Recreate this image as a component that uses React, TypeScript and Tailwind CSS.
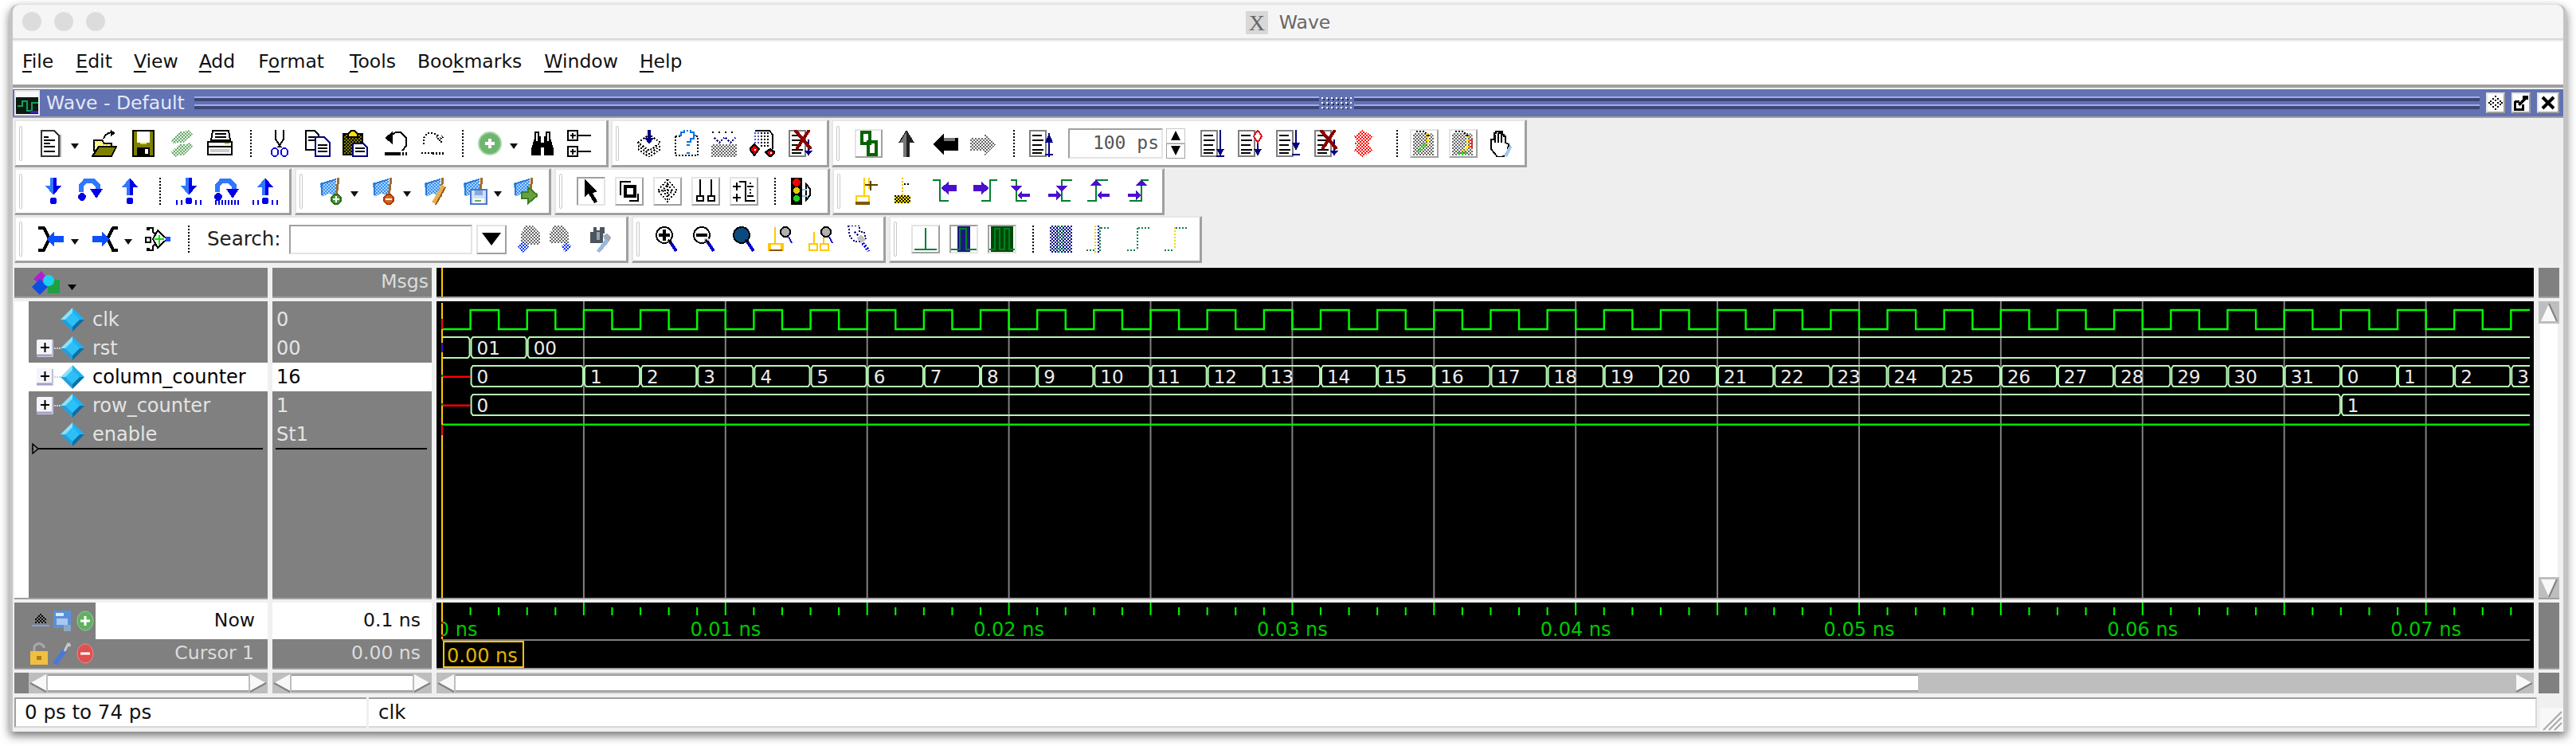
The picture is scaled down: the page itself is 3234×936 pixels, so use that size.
import React from "react";

const R = (x: number, y: number, w: number, h: number, f = "#000") => <rect x={x} y={y} width={w} height={h} fill={f} />;
const L = (d: string, c = "#000", sw = 1) => <path d={d} fill="none" stroke={c} strokeWidth={sw} />;
const D = (d: string, c = "#000", sw = 1) => <path d={d} fill="none" stroke={c} strokeWidth={sw} strokeDasharray="1 1" />;
const F = (d: string, f = "#000", s = "none") => <path d={d} fill={f} stroke={s} strokeWidth={1} />;
const C = (x: number, y: number, r: number, f = "#000", s = "none") => <circle cx={x} cy={y} r={r} fill={f} stroke={s} strokeWidth={1} />;

function G({ children, w = 32, h = 34, smooth = false }: { children: React.ReactNode; w?: number; h?: number; smooth?: boolean }) {
  return (
    <svg width={w} height={h} viewBox={`0 0 ${w / 2} ${h / 2}`} shapeRendering={smooth ? "auto" : "crispEdges"} className="block shrink-0">
      {children}
    </svg>
  );
}

function Defs() {
  const p = (id: string, c: string, bg = "none") => (
    <pattern id={id} patternUnits="userSpaceOnUse" width="2" height="2">
      <rect width="2" height="2" fill={bg} />
      <rect width="1" height="1" fill={c} />
      <rect x="1" y="1" width="1" height="1" fill={c} />
    </pattern>
  );
  return (
    <svg width="0" height="0" className="absolute">
      <defs>
        {p("dk", "#000")}
        {p("dg", "#6aaa6a", "#e6f2e6")}
        {p("dn", "#000080")}
        {p("db", "#0030f0")}
        {p("dy", "#ffff00", "#fff")}
        {p("dgr", "#666")}
        {p("dol", "#000", "#808000")}
        {p("dr", "#f00")}
        {p("dfl", "#3a90f0", "#a8d4ff")}
        {p("dgy", "#000", "#ffe000")}
      </defs>
    </svg>
  );
}

/* ---------- toolbar 1 icons ---------- */
const INew = () => (
  <G w={28}>
    {F("M1.5 .5H9.5L12.5 3.5V16.5H1.5Z", "#fff", "#333")}
    {R(13, 3, 1, 14, "#aaa")}
    {R(3, 4, 3, 1)}{R(3, 6, 7, 1)}{R(3, 8, 4, 1)}{R(3, 10, 7, 1)}{R(3, 13, 7, 1)}
  </G>
);
const IOpen = () => (
  <G>
    {L("M7.5 5.5Q9 1.5 13.5 1.5", "#000")}
    {F("M12 0L15 2L12 4Z")}
    {F("M1.5 6.5H6.5L8 8.5H12.5V13H1.5Z", "url(#dy)", "#000")}
    {F("M.5 16.5L4.5 10.5H15.5L12.5 16.5Z", "#808000", "#000")}
  </G>
);
const ISave = () => (
  <G>
    {F("M1.5 .5H14.5V16.5H1.5Z", "#808000", "#000")}
    {R(4, 1, 8, 7, "#fff")}
    {R(4, 11, 8, 5, "#000")}
    {R(9, 12, 2, 3, "#fff")}
    {R(6, 8, 4, 1, "#ffe000")}
  </G>
);
const IReload = () => (
  <G>
    {F("M1 7L7 1H10L12 0L15 3L9 8H5L3 9Z", "url(#dg)")}
    {F("M15 10L9 16H6L4 17L1 14L7 9H11L13 8Z", "url(#dg)")}
  </G>
);
const IPrint = () => (
  <G>
    {F("M3.5 .5H13.5L14.5 6.5H2.5Z", "#fff", "#000")}
    {R(5, 2, 7, 1)}{R(5, 4, 7, 1)}
    {F("M.5 7.5H15.5V15.5H.5Z", "#fff", "#000")}
    {R(1, 10, 14, 1)}{R(2, 12, 12, 2, "#ccc")}{R(11, 8, 3, 1, "#e0c000")}
  </G>
);
const ICut = () => (
  <G w={24}>
    {L("M3.5 0V6L7 11")}{L("M8.5 0V6L5 11")}
    <ellipse cx="3" cy="14" rx="2" ry="2.6" fill="none" stroke="#0000e0" />
    <ellipse cx="9" cy="14" rx="2" ry="2.6" fill="none" stroke="#0000e0" />
  </G>
);
const ICopy = () => (
  <G>
    {F("M.5 .5H6L8.5 3V12.5H.5Z", "#fff", "#000")}
    {R(2, 4, 4, 1)}{R(2, 6, 4, 1)}
    {F("M6.5 4.5H12L15.5 8V16.5H6.5Z", "#fff", "#000080")}
    {R(8, 9, 6, 1, "#000")}{R(8, 11, 6, 1, "#000")}{R(8, 13, 6, 1, "#000")}
  </G>
);
const IPaste = () => (
  <G>
    {F("M.5 2.5H12.5V15.5H.5Z", "url(#dol)", "#000")}
    {F("M3.5 2.5L5.5 .5H7.5L9.5 2.5V4.5H3.5Z", "#ffe000", "#000")}
    {F("M6.5 8.5H13L15.5 11V16.5H6.5Z", "#fff", "#000080")}
    {R(8, 11, 6, 1, "#000")}{R(8, 13, 6, 1, "#000")}
  </G>
);
const IUndo = () => (
  <G>
    {L("M4.5 3.5L8 1.5H11L14.5 5V10L12 13")}
    {F("M1 5L6 1V9Z")}
    {R(1, 14, 9, 2)}{D("M10 14.5H16")}{D("M10 15.5H16")}
  </G>
);
const IRedo = () => (
  <G>
    {D("M2.5 9V5L5 2H9L12 4")}
    {F("M10 3L12 5L14 3L15 5L13 6L15 8L13 8L11 6Z", "url(#dk)")}
    {D("M1 14.5H9")}{D("M8 14.5H15", "#000", 1.5)}
  </G>
);
const ICircle = ({ c = "#6fb56f", e = "#a8d8a8", plus = true, w = 30 }: { c?: string; e?: string; plus?: boolean; w?: number }) => (
  <G w={w} smooth>
    {C(w / 4, 8.5, 7, c, e)}
    {R(w / 4 - 3, 7.5, 6, 2, "#fff")}
    {plus && R(w / 4 - 1, 5.5, 2, 6, "#fff")}
  </G>
);
const IBinoc = () => (
  <G>
    {F("M3 1H6V4H7V8H9V4H10V1H13V5L15 12V16H9V11H7V16H1V12L3 5Z")}
    {R(4, 2, 1, 5, "#fff")}{R(11, 2, 1, 5, "#fff")}
  </G>
);
const ITree = () => (
  <G>
    {L("M.5 .5H6.5V6.5H.5Z")}{L("M3.5 2V5.5M2 3.5H5.5")}{R(7, 3, 8, 1)}
    {L("M.5 10.5H6.5V16.5H.5Z")}{L("M3.5 12V15.5M2 13.5H5.5")}{R(7, 13, 8, 1)}
  </G>
);
const IStackIn = () => (
  <G>
    {D("M1 8L8 3L15 8L8 13Z")}
    {D("M1 10L8 15L15 10")}{D("M1 12L8 17L15 12")}{D("M2 9L8 13L14 9")}
    {R(7, 0, 2, 6, "#000080")}{F("M5 5H11L8 9Z", "#000080")}
  </G>
);
const IQ = () => (
  <G>
    {D("M1 4V16H15V4")}{D("M1 4H4M12 4H15")}
    {D("M4 4V2H6V0H11V2H13V5H11V7H9V11", "#0a70e8", 2)}
    {D("M9 14V16", "#0a70e8", 2)}
  </G>
);
const IDots = () => (
  <G>
    {D("M1 1V3M5 1V3M9 1V3M13 1V3")}
    {D("M2 5L5 8L8 5M9 5L12 8L15 5", "#000080")}
    <rect x="0" y="9" width="16" height="8" fill="url(#dgr)" />
  </G>
);
const IRoll = () => (
  <G>
    {L("M3.5 .5H12.5L14.5 3V12")}
    {D("M3 2H7M3 4H7M3 6H7M3 8H7", "#5050c0")}
    {D("M7 2H13M7 4H13M7 6H13M7 8H13M7 10H13", "#000")}
    {F("M3 9L6 12L3 16L0 12Z", "#e00010", "#000")}
    {F("M13 12L16 14L13 17L10 14Z", "#e00010", "#000")}
    {R(3, 12, 1, 1, "#fff")}{R(13, 14, 1, 1, "#fff")}
  </G>
);
const IDoc = ({ v }: { v: "up" | "down" | "red" | "short" | "x" | "x2" }) => (
  <G>
    {F("M.5 .5H10.5V16.5H.5Z", "#fff", "#808080")}
    {R(2, 3, 6, 1)}{R(2, 6, 7, 1)}{R(2, 9, 6, 1)}{R(2, 12, 7, 1)}{R(2, 14, 6, 1)}
    {v === "up" && <>{R(12, 2, 1, 15, "#000080")}{F("M10 8L12.5 2L15 8Z", "#000080")}{R(10, 15, 5, 1, "#000080")}</>}
    {v === "down" && <>{R(12, 0, 1, 16, "#000080")}{F("M10 12H15L12.5 16Z", "#000080")}{R(10, 16, 5, 1, "#000080")}</>}
    {v === "red" && <>{R(12, 6, 1, 10, "#000080")}{F("M12.5 0L15 4L12.5 8L10 4Z", "#fff", "#e01020")}{F("M10 12H15L12.5 16Z", "#000080")}</>}
    {v === "short" && <>{R(12, 0, 1, 10, "#000080")}{F("M10 8H15L12.5 13Z", "#000080")}{R(10, 15, 5, 1, "#000080")}</>}
    {(v === "x" || v === "x2") && <>
      {R(12, 6, 1, 10, "#000080")}{F("M10 13H15L12.5 16Z", "#000080")}
      {L("M4 0L14 12M13 0L5 12", "#8b0000", 2)}
    </>}
  </G>
);
const IRedDith = () => (
  <G w={28}>
    {F("M7 0L13 4L10 8.5L13 13L7 17L1 13L4 8.5L1 4Z", "url(#dr)")}
    {D("M2 8.5H12", "#f00")}
  </G>
);
const IYellowPlus = ({ n }: { n: 1 | 2 }) => (
  <G>
    {F("M1 2H12L14 4V16H1Z", "url(#dgr)")}
    {D("M3 1L8 1L11 4", "#000", 1)}
    {D(n === 1 ? "M10 2V9L6 11" : "M11 4V11L7 14", "#ffd800", 2)}
    {D(n === 1 ? "M4 14L9 8" : "M5 15H10", "#30e030", 2)}
    {n === 2 && D("M13 6V11", "#ff2020", 2)}
  </G>
);
const IHand = () => (
  <G>
    {F("M3 10V6H5V2H6V1H8V2H9V1H10V3H11V4H12V8L14 9L13 15L10 17H7L3 12Z", "#fff", "#000")}
    {L("M5.5 3V8M7.5 2V8M9.5 2V8")}
    {F("M11 16L15 9L16 11L13 17Z", "#a0c8f0")}
  </G>
);
const Chain = () => (
  <G w={24}>
    {L("M2 1.5H7V8.5H2Z", "#006400", 2)}{L("M6 7.5H11V15.5H6Z", "#006400", 2)}
  </G>
);
const IUp = () => (
  <G>
    {F("M8 0L13 8H10V17H6V8H3Z", "#222")}
    {F("M8 1V17H6V8H4Z", "#777")}
  </G>
);
const ILeft = () => (
  <G>
    {F("M0 9L7 2V5H16V13H7V16Z", "#000")}
    {F("M7 5V7H14V5Z", "#777")}
  </G>
);
const IRight = () => (
  <G>
    {F("M16 9L9 2V5H0V13H9V16Z", "url(#dgr)")}
  </G>
);

/* ---------- row 2 ---------- */
const B = "#0000e8";
const B2 = "#2f78ff";
const Bars = () => <>{R(0, 14, 1, 3, B)}{R(3, 14, 1, 3, B)}{R(12, 14, 1, 3, B)}{R(15, 14, 1, 3, B)}</>;
const IStepIn = ({ bars = false }: { bars?: boolean }) => (
  <G>
    {F("M6 0H10V5H13L8 11L3 5H6Z", B)}{F("M6 0H8V11L3 5H6Z", B2)}
    {C(8, 14.5, 2.2, B)}{bars && <Bars />}
  </G>
);
const IStepUp = ({ bars = false }: { bars?: boolean }) => (
  <G>
    {F("M8 0L13 6H10V11H6V6H3Z", B)}{F("M8 0V11H6V6H3Z", B2)}
    {C(8, 14.5, 2.2, B)}{bars && <Bars />}
  </G>
);
const IOver = ({ bars = false }: { bars?: boolean }) => (
  <G>
    {L("M2.5 9V5L5 2H10L13 5V7", B2, 3)}
    {F("M8 7H16L12 13Z", B)}{C(3, 12, 2.4, B)}
    {bars && <>{D("M1 15.5H16", B, 3)}</>}
  </G>
);
const Flag = ({ children }: { children?: React.ReactNode }) => (
  <>
    {F("M1 4L6 3L11 1L11 11L6 10L2 12Z", "url(#dfl)")}
    {L("M2 4V11M1 4L11 1", "#2a7ad8")}
    {L("M12.5 0L11 12", "#a06a30", 1.5)}
    {children}
  </>
);
const IFlagAdd = () => (
  <G>
    <Flag>{C(11, 13.5, 3, "#4e9a3c", "#2f6a20")}{R(9, 13, 4, 1, "#fff")}{R(10.5, 11.5, 1, 4, "#fff")}</Flag>
  </G>
);
const IFlagDel = () => (
  <G>
    <Flag>{C(11, 13.5, 3, "#e0601a", "#a04010")}{R(9, 13, 4, 1, "#fff")}</Flag>
  </G>
);
const IFlagEdit = () => (
  <G>
    <Flag>{L("M13 5L7 16", "#e8b050", 3)}{L("M14 6L8 17", "#9a6020", 1)}</Flag>
  </G>
);
const IFlagSave = () => (
  <G>
    <Flag>{F("M5.5 7.5H15.5V16.5H5.5Z", "#cfe0f8", "#4a78c8")}{R(7, 13, 7, 3, "#fff")}{R(8, 14, 4, 1, "#60b060")}{R(8, 8, 5, 3, "#8aa8e0")}</Flag>
  </G>
);
const IFlagGo = () => (
  <G>
    <Flag>{F("M6 9H10V6L16 11L10 16V13H6Z", "#6aa040", "#3a8020")}</Flag>
  </G>
);
function Btn({ children, sunken = false, w = "w-[36px]" }: { children: React.ReactNode; sunken?: boolean; w?: string }) {
  return (
    <div className={`flex h-[36px] ${w} items-center justify-center border-2 bg-white ${sunken ? "border-t-[#a0a0a0] border-l-[#a0a0a0] border-b-[#e4e4e4] border-r-[#e4e4e4]" : "border-t-[#e4e4e4] border-l-[#e4e4e4] border-b-[#a0a0a0] border-r-[#a0a0a0]"}`}>
      {children}
    </div>
  );
}
const ICursor = () => (
  <G w={28} h={30}>{F("M3 0V11L5.5 9L9 15L11 14L8 8.5L11 7.5Z")}</G>
);
const IZoomBox = () => (
  <G w={28} h={30}>{L("M1.5 10V1.5H8")}{L("M4.5 4.5H10.5V10.5H4.5Z", "#000", 2)}{R(7, 13, 6, 1)}{L("M12.5 9V13.5")}</G>
);
const IPan = () => (
  <G w={28} h={30}>{D("M7 0L13 7L7 14L1 7Z")}{D("M7 3L10 7L7 11L4 7Z")}{D("M3 7H11")}{D("M7 2V13")}</G>
);
const ICurPair = () => (
  <G w={28} h={30}>{R(3, 0, 1, 10)}{R(10, 0, 1, 10)}{L("M1.5 10.5H5.5V13.5H1.5Z")}{L("M8.5 10.5H12.5V13.5H8.5Z")}</G>
);
const IPlusList = () => (
  <G w={28} h={30}>{L("M4 1.5H8V13.5H14")}{R(0, 4, 5, 1)}{R(2, 2, 1, 5)}{R(0, 11, 5, 1)}{R(2, 9, 1, 5)}{D("M11 2V9")}{R(9, 4, 4, 1)}{R(9, 10, 4, 1)}</G>
);
const ITraffic = () => (
  <G>
    {R(1, 0, 7, 17)}
    {C(4.5, 3, 2.4, "#f00")}{C(4.5, 8, 2, "#e0d000")}{C(4.5, 13, 2, "#20d020")}
    {L("M10.5 4L13 7V11L10.5 14Z", "#000")}{R(8, 7, 3, 1, "#80c8e8")}{R(8, 11, 3, 1, "#80c8e8")}
  </G>
);
const YC = ({ x = 6 }: { x?: number }) => <>{R(x, 0, 1, 11, "#ffd000")}</>;
const ICurAdd = () => (
  <G>
    <YC />{R(9, 0, 1, 7, "#ffd000")}
    {R(1, 11, 9, 5, "#ffd000")}{R(2, 12, 7, 3, "#fff")}{R(1, 15, 9, 2, "#7a5a00")}
    {R(7, 4, 8, 1, "#5a4000")}{R(10, 2, 1, 6, "#5a4000")}
  </G>
);
const ICurDis = () => (
  <G>
    {D("M6 0V11", "#e8c000")}{D("M7 4H11")}
    {F("M1 11H11V16H1Z", "url(#dgy)")}
  </G>
);
const Edge = ({ d, arrows }: { d: string; arrows: React.ReactNode }) => (
  <G>{L(d, "#008030", 1)}{arrows}</G>
);
const P = "#4a10d0";
const ArrL = (x: number, y: number, big = false) => big ? F(`M${x} ${y}L${x + 5} ${y - 4}V${y - 2}H${x + 10}V${y + 2}H${x + 5}V${y + 4}Z`, P) : F(`M${x} ${y}L${x + 3} ${y - 3}V${y - 1}H${x + 8}V${y + 1}H${x + 3}V${y + 3}Z`, P);
const ArrR = (x: number, y: number, big = false) => big ? F(`M${x} ${y}L${x - 5} ${y - 4}V${y - 2}H${x - 10}V${y + 2}H${x - 5}V${y + 4}Z`, P) : F(`M${x} ${y}L${x - 3} ${y - 3}V${y - 1}H${x - 8}V${y + 1}H${x - 3}V${y + 3}Z`, P);
const IE1 = () => <Edge d="M0 1.5H4.5V14.5H10" arrows={ArrL(5, 6.5, true)} />;
const IE2 = () => <Edge d="M16 1.5H11.5V14.5H6" arrows={ArrR(11, 6.5, true)} />;
const IE3 = () => <Edge d="M1 1.5H4.5V14.5H11" arrows={<>{F("M1 5H8L4.5 9Z", P)}{ArrL(5, 11)}</>} />;
const IE4 = () => <Edge d="M16 1.5H9.5V14.5H15" arrows={<>{F("M6 5H13L9.5 9Z", P)}{ArrR(9, 11)}</>} />;
const IE5 = () => <Edge d="M14 1.5H6.5V14.5H1" arrows={<>{F("M3 5H10L6.5 1Z", P)}{ArrL(7, 11)}</>} />;
const IE6 = () => <Edge d="M15 1.5H10.5V14.5H3" arrows={<>{F("M7 5H14L10.5 1Z", P)}{ArrR(10, 11)}</>} />;

/* ---------- row 3 ---------- */
const IColl = () => (
  <G>
    {L("M0 1.5H3.5L7 8L3.5 15.5H0", "#000", 2)}
    {F("M5 8.5L10 4V6.5H16V10.5H10V13Z", "#0a50ff")}
  </G>
);
const IExp = () => (
  <G>
    {L("M16 1.5H13L9.5 8L13 15.5H16", "#000", 2)}
    {F("M11 8.5L6 4V6.5H0V10.5H6V13Z", "#0a50ff")}
  </G>
);
const IDiff = () => (
  <G>
    {L("M1.5 1.5H5V4L7 6M7 11L5 13V15.5H1.5")}
    {R(1, 1, 2, 2)}{R(1, 14, 2, 2)}{R(0, 7, 3, 3, "#fff")}{L("M0.5 7.5H3.5V10.5H.5Z")}
    {F("M8 3L11 6L14 8.5L11 11L8 14L5 8.5Z", "#fff", "#000")}
    {R(6, 8, 6, 1, "#00e000")}{R(8.5, 6, 1, 6, "#00e000")}
    {R(13, 7, 3, 3, "#2050ff")}
  </G>
);
const ISearchDis = ({ flip = false }: { flip?: boolean }) => (
  <G>
    {F(flip ? "M1 11V5L4 0H9L13 5V11Z" : "M3 12V5L6 0H10L15 5V12Z", "url(#dgr)")}
    {F(flip ? "M11 10L15 13L11 17L8 13Z" : "M4 10L8 13L4 17L1 13Z", "url(#db)")}
  </G>
);
const ITool = () => (
  <G>
    {F("M2 4H4V1H6V3H8V1H11V5H10V11H2Z", "#4a5560")}
    {R(6, 4, 2, 5, "#9aa0a8")}
    {F("M6 16L11 9L10 6L13 5L15 8L13 11L8 17Z", "#9ab8e0")}
    {F("M12 5L15 7L14 10L11 8Z", "#a8a8a8")}
  </G>
);
const Handle = (x = 9, y = 10) => <>{L(`M${x} ${y}L${x + 4} ${y + 6}`, "#0000d0", 2)}</>;
const IMag = ({ t }: { t: "plus" | "minus" | "fill" }) => (
  <G>
    {C(6.5, 6, 5, t === "fill" ? "#0a4a80" : "#fff", "#000")}
    {t === "plus" && <>{R(3, 5, 7, 2)}{R(5.5, 2.5, 2, 7)}</>}
    {t === "minus" && <>{R(3, 5, 7, 2)}{R(8, 8, 3, 2, "#ccc")}</>}
    {Handle(10, 10)}
    {L("M9 9L11 11")}
  </G>
);
const ICurZoom = () => (
  <G>
    {R(4, 1, 1, 12, "#ffc800")}
    {R(0, 11, 10, 5, "#ffc800")}{R(2, 12, 6, 3, "#fff")}{R(1, 15, 8, 1, "#8a5a00")}
    {C(11, 4, 3, "#b0b0b0", "#000")}{L("M13 7L15 11", "#0000d0", 1)}
  </G>
);
const ICurZoom2 = () => (
  <G>
    {R(3, 4, 1, 8, "#ffc800")}{R(9, 1, 1, 11, "#ffc800")}
    {R(0, 11, 6, 5, "#ffc800")}{R(7, 11, 6, 5, "#ffc800")}{R(1, 12, 4, 3, "#fff")}{R(8, 12, 4, 3, "#fff")}
    {C(11, 4, 3, "#b0b0b0", "#000")}{L("M13 7L15 11", "#0000d0", 1)}
  </G>
);
const IMagDis = () => (
  <G>
    {D("M1 0H8V4H11L12 8L9 10H5L2 7Z", "#000080")}{D("M5 4L9 8", "#000080")}
    {F("M6 8L9 6L12 9L9 11Z", "#c0c0c0")}{D("M10 11L14 16", "#0000e0", 2)}
  </G>
);
const IW1 = () => <G w={32} h={32}>{R(7.5, 1, 1, 13, "#008030")}{R(1, 14, 14, 1, "#008030")}</G>;
const IW2 = () => (
  <G w={32} h={32}>{R(4, 0, 8, 16, "#1a1a80")}{L("M0 14.5H5.5V1.5H9.5V14.5H16", "#008030")}</G>
);
const IW3 = () => (
  <G w={32} h={32}>{R(1, 0, 14, 16, "#004a00")}{L("M0 14.5H3.5V1.5H6.5V14.5H9.5V1.5H12.5V14.5H16", "#008030")}</G>
);
const IDithWave = () => (
  <G>
    <rect x="1" y="0" width="14" height="17" fill="url(#dn)" />
    {D("M6 0V17", "#20a060")}{D("M9 0V17", "#20a060")}{D("M1 15H15", "#20a060")}
  </G>
);
const IDE1 = () => (
  <G>
    {D("M0 15.5H5", "#108040")}{D("M5.5 0V17", "#e8d800")}{D("M7.5 0V17", "#000080")}{D("M8.5 1V16", "#108040")}{D("M9 1.5H15", "#108040")}
  </G>
);
const IDE2 = () => <G>{D("M1 15.5H7", "#108040")}{D("M7.5 1.5V15", "#108040")}{D("M8 1.5H15", "#108040")}</G>;
const IDE3 = () => <G>{D("M1 15.5H7", "#108040")}{D("M7.5 1V15", "#e8d800")}{D("M8 1.5H15", "#108040")}</G>;

/* ---------- slots ---------- */
const S = ({ c, children }: { c?: string; children: React.ReactNode }) => (
  <div className={`flex w-[40px] shrink-0 items-center justify-center ${c ?? ""}`}>{children}</div>
);
const Drop = ({ c }: { c: string }) => (
  <div className={`flex w-[14px] shrink-0 justify-center pt-[8px] ${c}`}>
    <svg width="12" height="8" viewBox="0 0 12 8" className="block"><polygon points="1,0 11,0 6,7" fill="#111" /></svg>
  </div>
);
const Sep = ({ c }: { c: string }) => (
  <div className={`h-[34px] w-[2px] shrink-0 border-l-2 border-dotted border-black ${c}`} />
);
function Toolbar({ w, children }: { w: string; children: React.ReactNode }) {
  return (
    <div className={`flex h-full shrink-0 items-center border-t-2 border-l-2 border-r-[3px] border-b-[3px] border-t-[#e6e6e6] border-l-[#e6e6e6] border-r-[#a0a0a0] border-b-[#a0a0a0] bg-white ${w}`}>
      <div className="ml-[4px] h-[44px] w-[4px] shrink-0 rounded-[2px] border border-[#c8c8c8] bg-white" />
      {children}
    </div>
  );
}

/* ---------- wave ---------- */
const X = (t: number) => 7 + 35.58 * t;
const range = (a: number, b: number) => Array.from({ length: b - a + 1 }, (_, i) => a + i);
const WAVE_W = 2628;

function Bus({ top, bot, segs }: { top: number; bot: number; segs: [number, string][] }) {
  return (
    <>
      {segs.map(([t, label], i) => {
        const x0 = X(t) + 1;
        const next = segs[i + 1];
        const x1 = next ? X(next[0]) - 1 : WAVE_W + 20;
        const y = (top + bot) / 2;
        return (
          <g key={i}>
            <path
              d={`M${x0} ${y}L${x0} ${top + 3}L${x0 + 2} ${top}L${x1 - 2} ${top}L${x1} ${top + 3}L${x1} ${bot - 3}L${x1 - 2} ${bot}L${x0 + 2} ${bot}L${x0} ${bot - 3}Z`}
              fill="none"
              stroke="#b6f6b6"
              strokeWidth="2"
            />
            <text x={x0 + 7} y={bot - 4} fontSize="23" fill="#ececec" className="font-['DejaVu_Sans',sans-serif]">{label}</text>
          </g>
        );
      })}
    </>
  );
}

function WaveMain() {
  let clk = `M${X(0)} 35`;
  for (let k = 1; k <= 74; k++) {
    const y = k % 2 === 1 ? 11 : 35;
    clk += `L${X(k)} ${k % 2 === 1 ? 35 : 11}L${X(k)} ${y}`;
  }
  const cc: [number, string][] = [[1, "0"], ...range(1, 31).map((n): [number, string] => [3 + 2 * n, String(n)]), [67, "0"], [69, "1"], [71, "2"], [73, "3"]];
  return (
    <svg width="2633" height="372" className="block">
      {range(1, 14).map((k) => (
        <rect key={k} x={X(k * 5) - 1} y="0" width="2" height="372" fill="#808080" />
      ))}
      <svg width={WAVE_W} height="372">
        <path d={clk} fill="none" stroke="#00ff00" strokeWidth="2.4" />
        <Bus top={45} bot={71} segs={[[-1, ""], [1, "01"], [3, "00"]]} />
        <Bus top={81} bot={107} segs={cc} />
        <Bus top={117} bot={143} segs={[[1, "0"], [67, "1"]]} />
        <rect x="7" y="93.5" width={X(1) - 7} height="2.5" fill="#ff0000" />
        <rect x="7" y="129.5" width={X(1) - 7} height="2.5" fill="#ff0000" />
        <rect x="7" y="153.5" width={WAVE_W} height="2.4" fill="#00ee00" />
      </svg>
      <rect x="0" y="0" width="6" height="372" fill="#000" />
      <rect x="6" y="2" width="2" height="370" fill="#ffc800" />
      <rect x="6" y="22" width="2" height="13" fill="#e81010" />
      <rect x="6" y="52" width="2" height="12" fill="#3a10c0" />
      <rect x="6" y="92" width="2" height="3" fill="#109010" />
      <rect x="6" y="128" width="2" height="3" fill="#109010" />
      <rect x="6" y="155" width="2" height="13" fill="#e81010" />
    </svg>
  );
}

function WaveScale() {
  return (
    <svg width="2633" height="82" className="block">
      {range(1, 73).map((k) => (
        <rect key={k} x={X(k) - 1} y={k % 5 === 0 ? 0 : 6} width="2" height={k % 5 === 0 ? 16 : 10} fill="#00ff00" />
      ))}
      <svg x="7" width="2621" height="46">
        <text x="0" y="42" textAnchor="middle" fontSize="24" fill="#00c800" className="font-['DejaVu_Sans',sans-serif]">0.00 ns</text>
        {range(1, 7).map((k) => (
          <text key={k} x={355.8 * k} y="42" textAnchor="middle" fontSize="24" fill="#00c800" className="font-['DejaVu_Sans',sans-serif]">{`0.0${k} ns`}</text>
        ))}
      </svg>
      <rect x="6" y="0" width="2" height="46" fill="#ffc800" />
      <rect x="6" y="24" width="2" height="3" fill="#e81010" />
      <rect x="6" y="40" width="2" height="3" fill="#e81010" />
      <rect x="7" y="46" width="2621" height="2" fill="#808080" />
      <rect x="9" y="49" width="100" height="32" fill="none" stroke="#ffc800" strokeWidth="2" />
      <text x="13" y="75" fontSize="24" fill="#e0b400" className="font-['DejaVu_Sans',sans-serif]">0.00 ns</text>
    </svg>
  );
}

/* ---------- scrollbar pieces ---------- */
const ArrowBtn = ({ dir }: { dir: "l" | "r" | "u" | "d" }) => {
  const pts = { l: "2,12 22,1 22,23", r: "22,12 2,1 2,23", u: "12,3 2,25 22,25", d: "12,25 2,3 22,3" }[dir];
  const shade = { l: "M2 12L22 23", r: "M22 12L2 23", u: "M12 3L22 25", d: "M12 25L22 3" }[dir];
  return (
    <svg width="24" height={dir === "l" || dir === "r" ? 24 : 28} className="block shrink-0">
      <polygon points={pts} fill="#f8f8f8" />
      <path d={shade} stroke="#808080" strokeWidth="2" fill="none" />
    </svg>
  );
};
const Trough = ({ c }: { c: string }) => <div className={`h-[22px] border-t-2 border-b-2 border-t-[#a0a0a0] border-b-[#a0a0a0] bg-white ${c}`} />;

const Diamond = () => (
  <svg width="30" height="30" viewBox="0 0 30 30" className="block shrink-0">
    <polygon points="15,0 15,15 0,15" fill="#8fe0fa" />
    <polygon points="15,0 30,15 15,15" fill="#1cb2f4" />
    <polygon points="0,15 15,15 15,30" fill="#22a0dc" />
    <polygon points="30,15 15,15 15,30" fill="#0b6fa6" />
    <polygon points="15,6 24,15 15,24 6,15" fill="#2cc0f6" />
  </svg>
);
const Plus = () => (
  <svg width="22" height="24" viewBox="0 0 22 24" className="block shrink-0">
    <rect x="0" y="1" width="21" height="22" rx="2" fill="#f4f4fa" />
    <path d="M0 21H21" stroke="#a0a0c8" strokeWidth="3" />
    <path d="M20 2V22" stroke="#c0c0d8" strokeWidth="2" />
    <path d="M5 11H16M10.5 5V17" stroke="#000" strokeWidth="2" />
  </svg>
);

function Row({ name, plus, sel }: { name: string; plus?: boolean; sel?: boolean }) {
  return (
    <div className={`flex h-[36px] items-center text-[24px] ${sel ? "bg-white text-black" : "text-[#e4e4e4]"}`}>
      <div className="ml-[10px] flex w-[30px] items-center">
        {plus && <Plus />}
        {plus && <div className="h-0 w-[8px] border-t-2 border-dotted border-[#d0d0d0]" />}
      </div>
      <Diamond />
      <span className="ml-[10px]">{name}</span>
    </div>
  );
}
const Val = ({ v, sel }: { v: string; sel?: boolean }) => (
  <div className={`flex h-[36px] items-center pl-[5px] text-[24px] ${sel ? "bg-white text-black" : "text-[#e4e4e4]"}`}>{v}</div>
);

const U = ({ children }: { children: React.ReactNode }) => <span className="underline decoration-2 underline-offset-[4px]">{children}</span>;

export default function App() {
  return (
    <div className="h-[936px] w-[3234px] overflow-hidden bg-white pt-[5px] pl-[12px] font-['DejaVu_Sans',sans-serif] text-[23.5px] leading-none text-black">
      <Defs />
      <div className="relative flex h-[913px] w-[3210px] flex-col rounded-t-[12px] border-x-4 border-x-[#c4c4c4] bg-[#f0f0f0] shadow-[0_5px_12px_rgba(0,0,0,0.55)]">
        {/* OS title bar */}
        <div className="grid h-[43px] shrink-0 grid-cols-[1fr_auto_1fr] items-center rounded-t-[10px] border-t border-[#e0e0e0] bg-[#f5f5f5]">
          <div className="flex gap-[16px] pl-[12px]">
            <div className="size-[24px] rounded-full bg-[#dcdcdc]" />
            <div className="size-[24px] rounded-full bg-[#dcdcdc]" />
            <div className="size-[24px] rounded-full bg-[#dcdcdc]" />
          </div>
          <div className="flex items-center gap-[14px] pt-[3px]">
            <div className="flex h-[29px] w-[28px] items-center justify-center bg-[#d8d8d8] font-['Liberation_Serif',serif] text-[28px] text-[#666]">X</div>
            <span className="text-[#666]">Wave</span>
          </div>
          <div />
        </div>
        <div className="h-[4px] shrink-0 border-t-2 border-[#d8d8d8] bg-[#ececec]" />
        {/* menu */}
        <div className="flex h-[54px] shrink-0 items-center bg-white pl-[12px] pb-[2px] text-[23.5px] text-[#111]">
          <span><U>F</U>ile</span>
          <span className="ml-[28px]"><U>E</U>dit</span>
          <span className="ml-[27px]"><U>V</U>iew</span>
          <span className="ml-[26px]"><U>A</U>dd</span>
          <span className="ml-[29px]">F<U>o</U>rmat</span>
          <span className="ml-[32px]"><U>T</U>ools</span>
          <span className="ml-[27px]">Boo<U>k</U>marks</span>
          <span className="ml-[28px]"><U>W</U>indow</span>
          <span className="ml-[27px]"><U>H</U>elp</span>
        </div>
        <div className="h-[6px] shrink-0 border-t-4 border-[#a0a0a0] bg-[#ececec]" />
        {/* Wave - Default bar */}
        <div className="flex h-[36px] shrink-0 items-center border-b-2 border-[#a0a0a0] bg-[#6272b3]">
          <div className="ml-[2px] h-[32px] w-[32px] shrink-0 border-2 border-[#e8e8e8] bg-[#e8e8e8]">
            <svg width="28" height="28" viewBox="0 0 28 28" className="block">
              <rect width="28" height="7" fill="#f8f8f8" />
              <rect y="7" width="28" height="21" fill="#0a1a10" />
              <path d="M2 18H8V12H14V24H20V14H28" fill="none" stroke="#10a060" strokeWidth="2" />
              <rect x="18" y="24" width="10" height="3" fill="#4020c0" />
            </svg>
          </div>
          <span className="ml-[8px] pt-[2px] text-[#e4e8f6]">Wave - Default</span>
          <div className="relative ml-[12px] flex h-[16px] min-w-0 flex-1 flex-col gap-[4px]">
            <div className="h-[6px] border-t-2 border-b-4 border-t-[#a2acee] border-b-[#3c4676]" />
            <div className="h-[6px] border-t-2 border-b-4 border-t-[#a2acee] border-b-[#3c4676]" />
            <svg width="44" height="16" viewBox="0 0 44 16" className="absolute top-0 left-[1412px]" shapeRendering="crispEdges">
              <rect width="44" height="16" fill="#6272b3" />
              <path d="M3 2H41M3 8H41M3 14H41" stroke="#fff" strokeWidth="2" strokeDasharray="2 4" />
              <path d="M5 4H41M5 10H41M5 16H41" stroke="#20284a" strokeWidth="2" strokeDasharray="2 4" />
            </svg>
          </div>
          <div className="ml-[8px] flex h-[26px] w-[24px] shrink-0 items-center justify-center border-2 border-t-[#e4e4e4] border-l-[#e4e4e4] border-b-[#a0a0a0] border-r-[#a0a0a0] bg-white">
            <svg width="20" height="20" viewBox="0 0 20 20" className="block" shapeRendering="crispEdges">
              <path d="M10 1V3M10 6V8M10 12V14M10 17V19M1 10H3M6 10H8M12 10H14M17 10H19M7 4V6M13 4V6M4 7V9M16 7V9M4 11V13M16 11V13M7 14V16M13 14V16" stroke="#000" strokeWidth="2" />
            </svg>
          </div>
          <div className="ml-[8px] flex h-[26px] w-[24px] shrink-0 items-center justify-center border-2 border-t-[#e4e4e4] border-l-[#e4e4e4] border-b-[#a0a0a0] border-r-[#a0a0a0] bg-white">
            <svg width="20" height="20" viewBox="0 0 20 20" className="block" shapeRendering="crispEdges">
              <path d="M2 8H8M2 8V18H12V12" fill="none" stroke="#000" strokeWidth="3" />
              <path d="M7 13L17 3" stroke="#000" strokeWidth="3" /><rect x="12" y="1" width="7" height="5" fill="#000" />
            </svg>
          </div>
          <div className="mx-[5px] ml-[8px] flex h-[26px] w-[28px] shrink-0 items-center justify-center border-2 border-t-[#e4e4e4] border-l-[#e4e4e4] border-b-[#a0a0a0] border-r-[#a0a0a0] bg-white">
            <svg width="20" height="18" viewBox="0 0 20 18" className="block"><path d="M3 2L17 16M17 2L3 16" stroke="#000" strokeWidth="4" /></svg>
          </div>
        </div>

        {/* toolbars */}
        <div className="flex shrink-0 flex-col px-[2px]">
          <div className="mt-[2px] flex h-[60px] gap-[3px] bg-[#eeeeee]">
            <Toolbar w="w-[746px]">
              <S c="ml-[15px]"><INew /></S><Drop c="ml-[4px]" />
              <S c="ml-[10px]"><IOpen /></S><S c="ml-[9px]"><ISave /></S><S c="ml-[8px]"><IReload /></S><S c="ml-[8px]"><IPrint /></S>
              <Sep c="ml-[18px]" />
              <S c="ml-[15px]"><ICut /></S><S c="ml-[8px]"><ICopy /></S><S c="ml-[7px]"><IPaste /></S><S c="ml-[11px]"><IUndo /></S><S c="ml-[6px]"><IRedo /></S>
              <Sep c="ml-[17px]" />
              <S c="ml-[13px]"><ICircle /></S><Drop c="ml-[3px]" />
              <S c="ml-[9px]"><IBinoc /></S><S c="ml-[7px]"><ITree /></S>
            </Toolbar>
            <Toolbar w="w-[274px]">
              <S c="ml-[18px]"><IStackIn /></S><S c="ml-[7px]"><IQ /></S><S c="ml-[7px]"><IDots /></S><S c="ml-[8px]"><IRoll /></S><S c="ml-[9px]"><IDoc v="x" /></S>
            </Toolbar>
            <Toolbar w="w-[873px]">
              <S c="ml-[16px]"><Btn w="w-[35px]"><Chain /></Btn></S>
              <S c="ml-[8px]"><IUp /></S><S c="ml-[9px]"><ILeft /></S><S c="ml-[7px]"><IRight /></S>
              <Sep c="ml-[18px]" />
              <S c="ml-[14px]"><IDoc v="up" /></S>
              <div className="ml-[13px] flex h-[38px] w-[119px] shrink-0 items-center justify-end border-2 border-t-[#a0a0a0] border-l-[#a0a0a0] border-b-[#e4e4e4] border-r-[#e4e4e4] bg-white pr-[3px] font-['DejaVu_Sans_Mono',monospace] text-[23px] text-[#555]">100 ps</div>
              <div className="ml-[4px] flex h-[38px] w-[24px] shrink-0 flex-col">
                <div className="flex h-[19px] items-center justify-center border border-[#c8c8c8] bg-white"><svg width="14" height="14" className="block"><polygon points="7,1 13,13 1,13" fill="#000" /></svg></div>
                <div className="flex h-[19px] items-center justify-center border border-[#a0a0a0] bg-white"><svg width="14" height="14" className="block"><polygon points="7,13 13,1 1,1" fill="#000" /></svg></div>
              </div>
              <S c="ml-[15px]"><IDoc v="down" /></S><S c="ml-[7px]"><IDoc v="red" /></S><S c="ml-[8px]"><IDoc v="short" /></S><S c="ml-[8px]"><IDoc v="x2" /></S><S c="ml-[5px]"><IRedDith /></S>
              <Sep c="ml-[22px]" />
              <S c="ml-[13px]"><Btn><IYellowPlus n={1} /></Btn></S><S c="ml-[9px]"><Btn><IYellowPlus n={2} /></Btn></S><S c="ml-[5px]"><IHand /></S>
            </Toolbar>
          </div>
          <div className="mt-[1px] flex h-[59px] gap-[4px] bg-[#eeeeee]">
            <Toolbar w="w-[348px]">
              <S c="ml-[19px]"><IStepIn /></S><S c="ml-[6px]"><IOver /></S><S c="ml-[10px]"><IStepUp /></S>
              <Sep c="ml-[17px]" />
              <S c="ml-[15px]"><IStepIn bars /></S><S c="ml-[7px]"><IOver bars /></S><S c="ml-[9px]"><IStepUp bars /></S>
            </Toolbar>
            <Toolbar w="w-[322px]">
              <S c="ml-[16px]"><IFlagAdd /></S><Drop c="ml-[2px]" />
              <S c="ml-[10px]"><IFlagDel /></S><Drop c="ml-[2px]" />
              <S c="ml-[9px]"><IFlagEdit /></S>
              <S c="ml-[9px]"><IFlagSave /></S><Drop c="ml-[2px]" />
              <S c="ml-[7px]"><IFlagGo /></S>
            </Toolbar>
            <Toolbar w="w-[346px]">
              <S c="ml-[16px]"><Btn sunken><ICursor /></Btn></S>
              <S c="ml-[8px]"><Btn><IZoomBox /></Btn></S>
              <S c="ml-[8px]"><Btn><IPan /></Btn></S>
              <S c="ml-[8px]"><Btn><ICurPair /></Btn></S>
              <S c="ml-[8px]"><Btn><IPlusList /></Btn></S>
              <Sep c="ml-[18px]" />
              <S c="ml-[13px]"><ITraffic /></S>
            </Toolbar>
            <div className="-ml-[1px]">
              <Toolbar w="w-[417px]">
                <S c="ml-[13px]"><ICurAdd /></S><S c="ml-[9px]"><ICurDis /></S><S c="ml-[10px]"><IE1 /></S><S c="ml-[9px]"><IE2 /></S><S c="ml-[7px]"><IE3 /></S><S c="ml-[7px]"><IE4 /></S><S c="ml-[9px]"><IE5 /></S><S c="ml-[9px]"><IE6 /></S>
              </Toolbar>
            </div>
          </div>
          <div className="mt-[1px] flex h-[59px] gap-[4px] bg-[#eeeeee]">
            <Toolbar w="w-[771px]">
              <S c="ml-[16px]"><IColl /></S><Drop c="ml-[3px]" />
              <S c="ml-[11px]"><IExp /></S><Drop c="ml-[2px]" />
              <S c="ml-[10px]"><IDiff /></S>
              <Sep c="ml-[18px]" />
              <span className="ml-[22px] w-[91px] shrink-0 whitespace-nowrap text-[24.5px] text-[#222]">Search:</span>
              <div className="ml-[12px] h-[37px] w-[230px] shrink-0 border-2 border-t-[#a0a0a0] border-l-[#a0a0a0] border-b-[#e4e4e4] border-r-[#e4e4e4] bg-white" />
              <div className="ml-[5px] flex h-[37px] w-[38px] shrink-0 items-center justify-center border-2 border-t-[#e4e4e4] border-l-[#e4e4e4] border-b-[#a0a0a0] border-r-[#a0a0a0] bg-white">
                <svg width="24" height="16" className="block"><polygon points="0,0 24,0 12,16" fill="#000" /></svg>
              </div>
              <S c="ml-[8px]"><ISearchDis /></S><S><ISearchDis flip /></S><S c="ml-[9px]"><ITool /></S>
            </Toolbar>
            <Toolbar w="w-[319px]">
              <S c="ml-[14px]"><IMag t="plus" /></S><S c="ml-[7px]"><IMag t="minus" /></S><S c="ml-[10px]"><IMag t="fill" /></S><S c="ml-[6px]"><ICurZoom /></S><S c="ml-[11px]"><ICurZoom2 /></S><S c="ml-[8px]"><IMagDis /></S>
            </Toolbar>
            <Toolbar w="w-[393px]">
              <S c="ml-[16px]"><Btn w="w-[36px]"><IW1 /></Btn></S><S c="ml-[8px]"><Btn sunken><IW2 /></Btn></S><S c="ml-[8px]"><Btn sunken><IW3 /></Btn></S>
              <Sep c="ml-[18px]" />
              <S c="ml-[14px]"><IDithWave /></S><S c="ml-[8px]"><IDE1 /></S><S c="ml-[9px]"><IDE2 /></S><S c="ml-[7px]"><IDE3 /></S>
            </Toolbar>
          </div>
        </div>

        {/* panes */}
        <div className="mt-[6px] grid shrink-0 grid-cols-[318px_200px_2633px_26px] grid-rows-[38px_374px_84px_26px] gap-x-[6px] gap-y-[4px] bg-[#f0f0f0] pl-[2px] text-[23.5px]">
          {/* header */}
          <div className="flex items-end border-b-2 border-[#a0a0a0] bg-[#808080] pb-[2px] pl-[22px]">
            <svg width="62" height="30" viewBox="0 0 62 30" className="block">
              <polygon points="12,0 20,10 12,18 2,10" fill="#b020d0" />
              <rect x="20" y="11" width="15" height="17" fill="#20a040" />
              <polygon points="10,10 20,20 10,30 0,20" fill="#0a50e0" />
              <circle cx="21" cy="12" r="7" fill="#20d0f0" />
              <polygon points="45,17 56,17 50.5,24" fill="#000" />
            </svg>
          </div>
          <div className="flex items-center justify-end border-b-2 border-[#a0a0a0] bg-[#808080] pr-[4px] text-[#dcdcdc]">Msgs</div>
          <div className="border-b-2 border-[#a0a0a0] bg-black pl-[6px]">
            <div className="h-full w-[2px] bg-[#ffc800]" />
          </div>
          <div className="border-b-2 border-[#a0a0a0] bg-[#808080]" />

          {/* main */}
          <div className="flex border-b-2 border-[#a0a0a0]">
            <div className="w-[18px] shrink-0 bg-white" />
            <div className="relative min-w-0 flex-1 bg-[#808080] pt-[5px]">
              <Row name="clk" />
              <Row name="rst" plus />
              <Row name="column_counter" plus sel />
              <Row name="row_counter" plus />
              <Row name="enable" />
              <div className="absolute top-[184px] left-[4px] h-[2px] w-[290px] bg-black" />
              <svg width="10" height="14" className="absolute top-[178px] left-[4px]"><polygon points="1,1 8,7 1,13" fill="#808080" stroke="#000" strokeWidth="1.5" /></svg>
            </div>
          </div>
          <div className="relative border-b-2 border-[#a0a0a0] bg-[#808080] pt-[5px]">
            <Val v="0" />
            <Val v="00" />
            <Val v="16" sel />
            <Val v="1" />
            <Val v="St1" />
            <div className="absolute top-[184px] left-[4px] h-[2px] w-[190px] bg-black" />
          </div>
          <div className="overflow-hidden border-b-2 border-[#a0a0a0] bg-black"><WaveMain /></div>
          <div className="flex flex-col items-center border-b-2 border-[#a0a0a0] bg-[#f0f0f0]">
            <div className="flex h-[28px] w-full justify-center bg-[#bebebe]"><ArrowBtn dir="u" /></div>
            <div className="min-h-0 w-[22px] flex-1 bg-white" />
            <div className="flex h-[26px] w-full justify-center bg-[#bebebe]"><ArrowBtn dir="d" /></div>
          </div>

          {/* footer */}
          <div className="flex flex-col border-b-2 border-[#a0a0a0] bg-[#808080]">
            <div className="flex h-[46px] items-stretch">
              <div className="flex w-[102px] shrink-0 items-center gap-[5px] pl-[22px]">
                <svg width="22" height="22" viewBox="0 0 11 11" shapeRendering="crispEdges" className="block"><path d="M2 7V3H4V1H7V3H9V7Z" fill="url(#dk)" /><rect x="0" y="8" width="11" height="1" fill="#7aa0e8" /></svg>
                <svg width="24" height="26" viewBox="0 0 24 26" className="block"><rect width="22" height="22" fill="#5a90d8" /><rect x="3" y="3" width="10" height="4" fill="#dde8f8" /><rect x="4" y="10" width="14" height="8" fill="#a8c8f0" /><rect x="13" y="18" width="9" height="8" fill="#8aa8c8" /></svg>
                <svg width="22" height="26" viewBox="0 0 22 26" className="block"><ellipse cx="11" cy="13" rx="10" ry="12" fill="#60b060" stroke="#90d090" /><path d="M5 13H17M11 7V19" stroke="#fff" strokeWidth="3" /></svg>
              </div>
              <div className="flex min-w-0 flex-1 items-center justify-end bg-white pr-[16px] text-[#111]">Now</div>
            </div>
            <div className="flex min-h-0 flex-1 items-center">
              <div className="flex w-[102px] shrink-0 items-center gap-[6px] pl-[20px]">
                <svg width="22" height="30" viewBox="0 0 22 30" className="block"><path d="M5 12V6Q11 -1 17 6V8" fill="none" stroke="#a8a8a8" strokeWidth="3" /><rect x="0" y="12" width="22" height="17" fill="#f0c040" /><rect x="8" y="18" width="6" height="5" fill="#a88020" /></svg>
                <svg width="24" height="30" viewBox="0 0 24 30" className="block"><path d="M3 28L16 10" stroke="#4a78d8" strokeWidth="6" /><path d="M15 12L20 2M20 2L22 6" stroke="#c8c8c8" strokeWidth="3" fill="none" /></svg>
                <svg width="22" height="26" viewBox="0 0 22 26" className="block"><ellipse cx="11" cy="13" rx="10" ry="12" fill="#e05050" stroke="#f08888" /><path d="M5 13H17" stroke="#fff" strokeWidth="3" /></svg>
              </div>
              <div className="flex min-w-0 flex-1 justify-end pr-[17px] text-[#dcdcdc]">Cursor 1</div>
            </div>
          </div>
          <div className="flex flex-col border-b-2 border-[#a0a0a0] bg-[#808080]">
            <div className="flex h-[46px] items-center justify-end bg-white pr-[14px] text-[#111]">0.1 ns</div>
            <div className="flex min-h-0 flex-1 items-center justify-end pr-[14px] text-[#dcdcdc]">0.00 ns</div>
          </div>
          <div className="overflow-hidden border-b-2 border-[#a0a0a0] bg-black"><WaveScale /></div>
          <div className="border-b-2 border-[#a0a0a0] bg-[#808080]" />

          {/* scrollbars */}
          <div className="flex items-center bg-[#bebebe]">
            <div className="h-full w-[18px] shrink-0 bg-[#808080]" />
            <ArrowBtn dir="l" />
            <Trough c="min-w-0 flex-1" />
            <ArrowBtn dir="r" />
          </div>
          <div className="flex items-center bg-[#bebebe]">
            <ArrowBtn dir="l" />
            <Trough c="min-w-0 flex-1" />
            <ArrowBtn dir="r" />
          </div>
          <div className="flex items-center bg-[#bebebe]">
            <ArrowBtn dir="l" />
            <Trough c="w-[1836px] shrink-0" />
            <div className="min-w-0 flex-1" />
            <ArrowBtn dir="r" />
          </div>
          <div className="bg-[#808080]" />
        </div>

        {/* status */}
        <div className="mt-[5px] flex h-[38px] shrink-0 gap-[3px] pl-[2px] text-[24.5px] text-[#111]">
          <div className="flex w-[442px] shrink-0 items-center border-t-2 border-l-2 border-b-2 border-t-[#a0a0a0] border-l-[#a0a0a0] border-b-[#d8d8d8] bg-white pl-[11px]">0 ps to 74 ps</div>
          <div className="flex w-[2722px] shrink-0 items-center border-t-2 border-r-2 border-b-2 border-t-[#a0a0a0] border-r-[#d8d8d8] border-b-[#d8d8d8] bg-white pl-[12px]">clk</div>
        </div>
        <svg width="29" height="30" viewBox="0 0 29 30" className="absolute right-0 bottom-0">
          <rect width="29" height="30" fill="#f8f8f8" />
          <path d="M4 28L27 5M11 28L27 12M18 28L27 19" stroke="#a8a8a8" strokeWidth="2" />
        </svg>
      </div>
    </div>
  );
}
